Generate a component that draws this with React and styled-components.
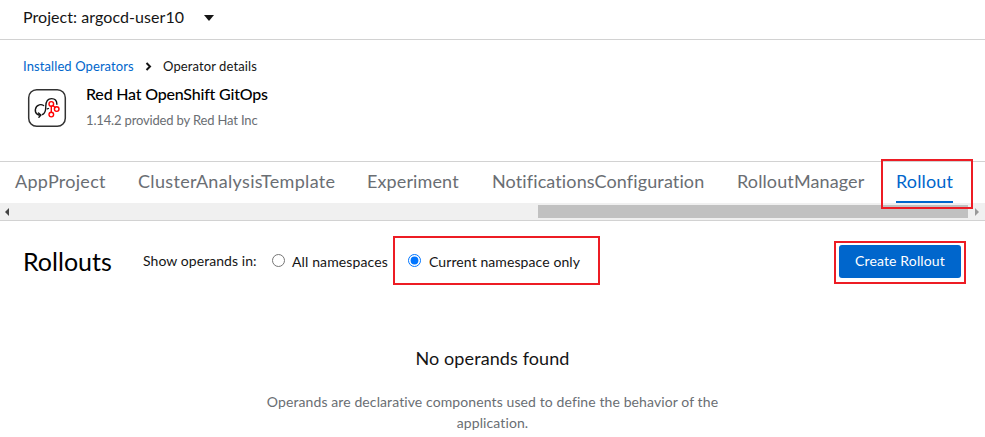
import React from 'react';
import styled, { createGlobalStyle, css } from 'styled-components';

const GlobalStyle = createGlobalStyle`
  * { box-sizing: border-box; }
  body {
    margin: 0;
    overflow: hidden;
    background: #fff;
    color: #151515;
    font-family: Lato, "Liberation Sans", sans-serif;
    font-size: 14px;
  }
  h1, h2, p { margin: 0; font-weight: 400; }
`;

const Page = styled.div`
  display: flex;
  flex-direction: column;
  width: 985px;
  height: 437px;
`;

const ProjectBar = styled.header`
  display: flex;
  align-items: center;
  gap: 20px;
  height: 40px;
  padding: 0 23px 6px;
  border-bottom: 1px solid #d2d2d2;
  font-size: 16px;
  letter-spacing: 0.06px;
`;

const Caret = styled.span`
  margin-top: 2px;
  border: 5px solid transparent;
  border-top: 6px solid #151515;
  border-bottom: 0;
`;

const Heading = styled.section`
  display: flex;
  flex-direction: column;
  height: 122px;
  padding: 17px 23px 0;
  border-bottom: 1px solid #d2d2d2;
`;

const Breadcrumb = styled.nav`
  display: flex;
  align-items: center;
  height: 18px;
  font-size: 13px;
  letter-spacing: 0.1px;

  a { width: 122px; color: #06c; text-decoration: none; }
  svg { width: 7px; height: 9px; margin-right: 11px; }
`;

const Operator = styled.div`
  display: flex;
  gap: 19px;
  padding: 9px 0 0 4px;

  > svg { width: 40px; height: 40px; margin-top: 4px; }
`;

const OperatorName = styled.h1`
  color: #000;
  font-size: 16px;
  font-weight: 500;
  line-height: 20px;
  letter-spacing: -0.2px;
`;

const Provider = styled.p`
  margin-top: 7px;
  color: #6a6e73;
  font-size: 13px;
  line-height: 18px;
  letter-spacing: -0.16px;
`;

const Tabs = styled.nav`
  display: flex;
  height: 41px;
  padding-left: 15px;
`;

const Tab = styled.a`
  flex: none;
  width: ${(p) => p.$width}px;
  height: 41px;
  margin-right: ${(p) => p.$gap}px;
  color: ${(p) => (p.$active ? '#06c' : '#6a6e73')};
  border-bottom: 2px solid ${(p) => (p.$active ? '#06c' : 'transparent')};
  font-size: 18px;
  line-height: 38px;
  letter-spacing: ${(p) => p.$tracking}px;
  white-space: nowrap;
`;

const Scrollbar = styled.div`
  display: flex;
  align-items: center;
  justify-content: space-between;
  height: 18px;
  padding: 0 6px 0 5px;
  background: #f0f0f0;
  border-bottom: 1px solid #d2d2d2;
`;

const Arrow = styled.span`
  border: 4px solid transparent;
  ${(p) => (p.$left
    ? css`border-left: 0; border-right-color: #444;`
    : css`border-right: 0; border-left-color: #999;`)}
`;

const Thumb = styled.span`
  width: 430px;
  height: 13px;
  margin: 0 7px 0 auto;
  background: #c1c1c1;
`;

const Toolbar = styled.div`
  display: flex;
  align-items: center;
  height: 81px;
  padding: 0 19px 1px 23px;
`;

const Title = styled.h1`
  width: 120px;
  color: #000;
  font-size: 25px;
  line-height: 32px;
  letter-spacing: 0.02px;
`;

const FilterLabel = styled.span`
  width: 129px;
  padding-bottom: 2px;
  letter-spacing: 0.07px;
`;

const Option = styled.label`
  display: flex;
  align-items: center;
  padding-top: 1px;
  white-space: nowrap;
  letter-spacing: ${(p) => p.$tracking}px;
`;

const Radio = styled.input`
  width: 13px;
  height: 13px;
  margin: 0 ${(p) => p.$gap}px 2px 0;
`;

const Callout = styled.div`
  display: flex;
  align-items: center;
  flex: none;
  width: ${(p) => p.$width}px;
  height: ${(p) => p.$height}px;
  border: 2px solid #ed1c24;
`;

const OptionCallout = styled(Callout)`
  margin: 0 0 2px 5px;
  padding: 2px 0 0 13px;
`;

const ActionCallout = styled(Callout)`
  justify-content: center;
  margin: 3px 0 0 auto;
  padding-bottom: 2px;
`;

/* Drawn over the tab strip and the scrollbar below it. */
const TabCallout = styled(Callout)`
  position: absolute;
  left: 881px;
  top: 159px;
`;

const CreateButton = styled.button`
  width: 122px;
  height: 33px;
  padding: 0 0 3px;
  border: 0;
  border-radius: 3px;
  background: #06c;
  color: #fff;
  font: inherit;
  letter-spacing: 0.14px;
`;

const EmptyState = styled.section`
  display: flex;
  flex-direction: column;
  align-items: center;
  padding-top: 43px;
  text-align: center;
`;

const EmptyTitle = styled.h2`
  font-size: 18px;
  line-height: 26px;
  letter-spacing: 0.1px;
`;

const EmptyText = styled.p`
  width: 470px;
  margin-top: 20px;
  color: #6a6e73;
  line-height: 21px;
  letter-spacing: 0.1px;
`;

const tabs = [
  ['AppProject', 91, 32, 0.28],
  ['ClusterAnalysisTemplate', 197, 32, 0.33],
  ['Experiment', 93, 32, 0.12],
  ['NotificationsConfiguration', 213, 32, 0.12],
  ['RolloutManager', 128, 31, 0.12],
  ['Rollout', 57, 0, 0.15],
];

function GitOpsLogo() {
  return (
    <svg viewBox="0 0 40 40" fill="none" strokeLinecap="round">
      <rect x="1.7" y="1.7" width="36.6" height="36.6" rx="8" stroke="#333" strokeWidth="1.5" />
      <path d="M16.6 17.5c-1.4-.9-3-1.1-4.4-.6-4.4 1.4-5.2 7.2-1.7 9.4.9.6 1.8.8 2.9.8" stroke="#151515" strokeWidth="1.4" />
      <path d="m11.5 25 2.4 2.1-2 2.2M15.6 26.5c3.4-1.4 3.1-5 3.2-8.4.1-4.7 2.2-7.5 5.8-7.5 3.2 0 5.2 2.2 5.3 5.6" stroke="#151515" strokeWidth="1.4" />
      <path d="m20.2 20.9 1.3-.4" stroke="#151515" strokeWidth="1.3" />
      <g stroke="#f00" strokeWidth="1.4">
        <circle cx="24.3" cy="15.9" r="2.3" />
        <circle cx="29.7" cy="21.1" r="2.3" />
        <circle cx="24.3" cy="26.6" r="2.3" />
        <path d="M24.3 18.2v6M25.9 17.6l2.2 2" />
      </g>
    </svg>
  );
}

export default function App() {
  return (
    <Page>
      <GlobalStyle />
      <ProjectBar>
        <span>Project: argocd-user10</span>
        <Caret />
      </ProjectBar>
      <Heading>
        <Breadcrumb>
          <a>Installed Operators</a>
          <svg viewBox="0 0 7 9" fill="none" stroke="#151515" strokeWidth="2">
            <path d="m1.5 1 3.5 3.5L1.5 8" />
          </svg>
          <span>Operator details</span>
        </Breadcrumb>
        <Operator>
          <GitOpsLogo />
          <div>
            <OperatorName>Red Hat OpenShift GitOps</OperatorName>
            <Provider>1.14.2 provided by Red Hat Inc</Provider>
          </div>
        </Operator>
      </Heading>
      <Tabs>
        {tabs.map(([name, width, gap, tracking]) => (
          <Tab key={name} $width={width} $gap={gap} $tracking={tracking} $active={name === 'Rollout'}>
            {name}
          </Tab>
        ))}
      </Tabs>
      <Scrollbar>
        <Arrow $left />
        <Thumb />
        <Arrow />
      </Scrollbar>
      <TabCallout $width={92} $height={50} />
      <Toolbar>
        <Title>Rollouts</Title>
        <FilterLabel>Show operands in:</FilterLabel>
        <Option $tracking={0.13}>
          <Radio type="radio" name="scope" $gap={7} />
          All namespaces
        </Option>
        <OptionCallout $width={207} $height={49}>
          <Option $tracking={0.09}>
            <Radio type="radio" name="scope" defaultChecked $gap={8} />
            Current namespace only
          </Option>
        </OptionCallout>
        <ActionCallout $width={132} $height={43}>
          <CreateButton>Create Rollout</CreateButton>
        </ActionCallout>
      </Toolbar>
      <EmptyState>
        <EmptyTitle>No operands found</EmptyTitle>
        <EmptyText>
          Operands are declarative components used to define the behavior of the application.
        </EmptyText>
      </EmptyState>
    </Page>
  );
}
